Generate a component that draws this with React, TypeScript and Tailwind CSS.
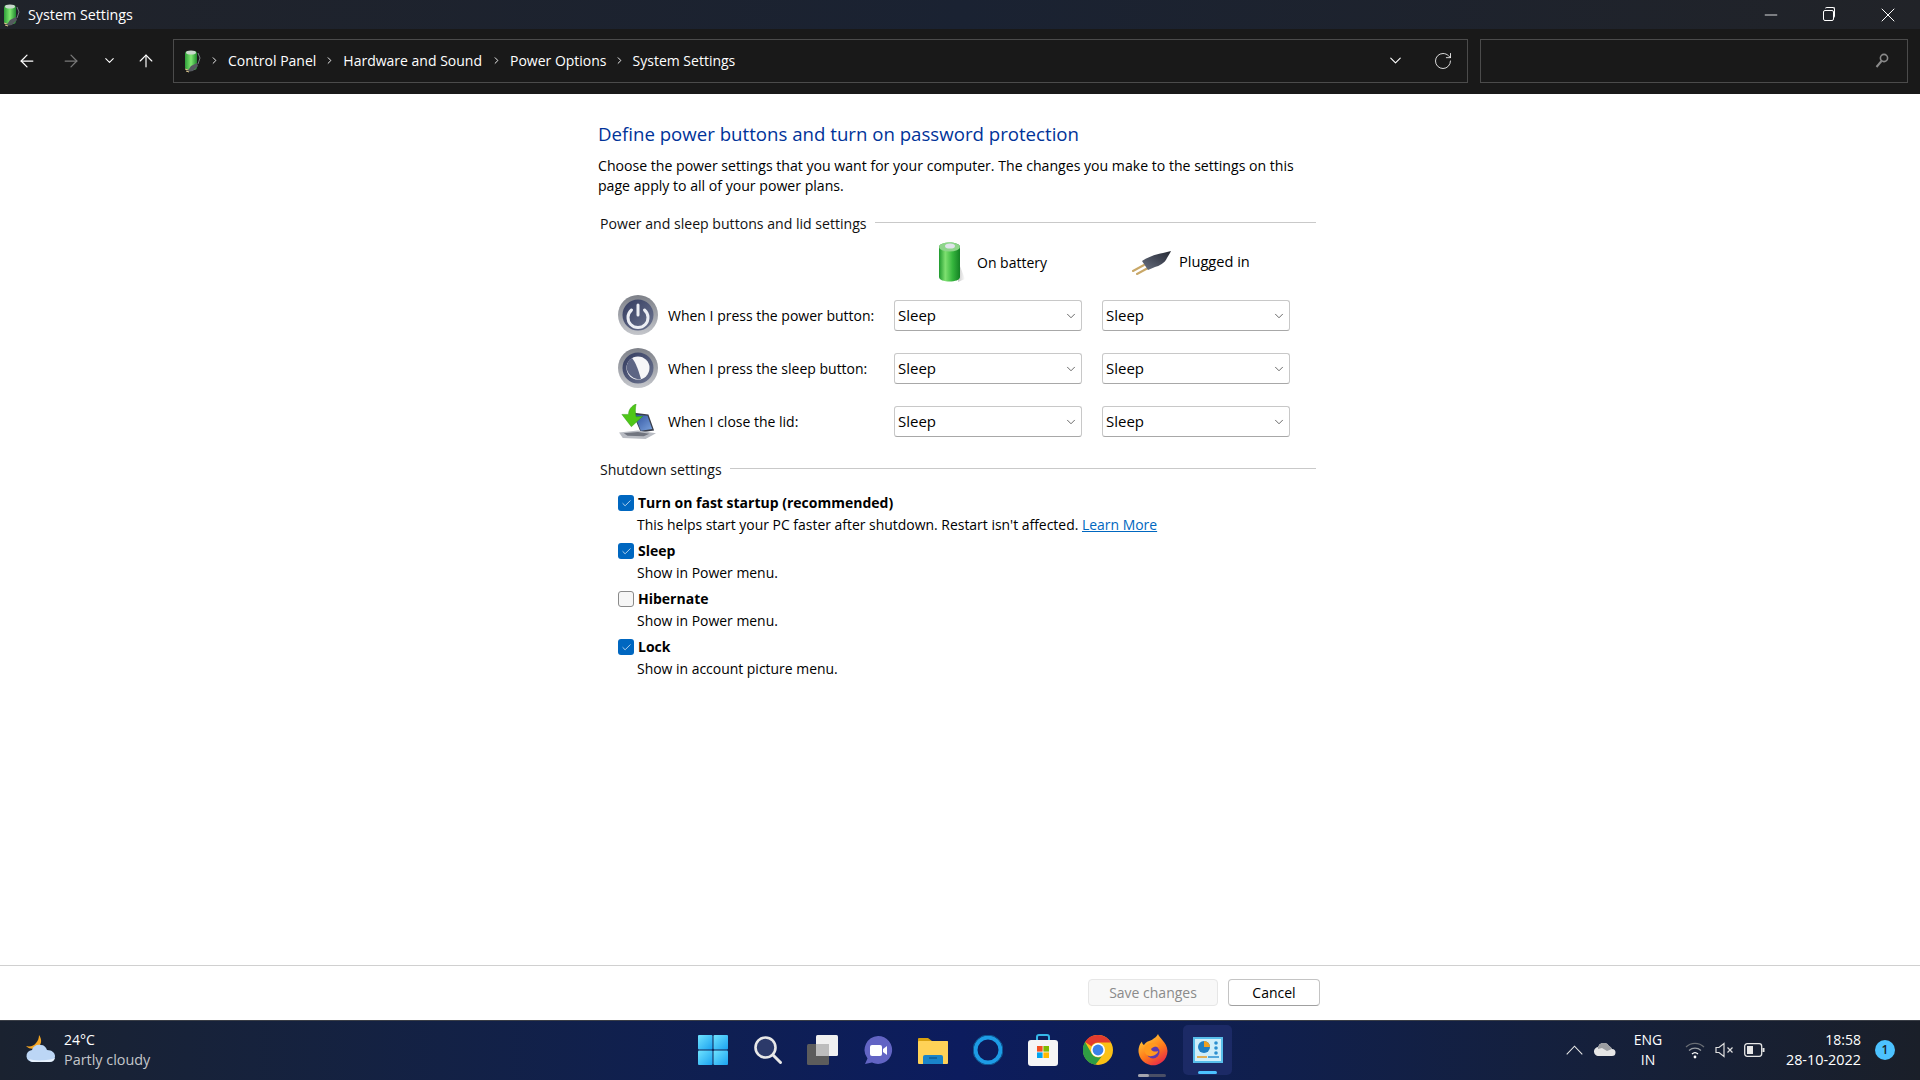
import { ArrowLeft, ArrowRight, ArrowUp, ChevronDown, ChevronRight, Check, Minus, X, RotateCw } from 'lucide-react';

function BatteryPlugIcon() {
  return (
    <svg width="20" height="24" viewBox="0 0 20 24">
      <defs>
        <linearGradient id="tb" x1="0" x2="1" y1="0" y2="0">
          <stop offset="0" stopColor="#2f9e3a" />
          <stop offset="0.5" stopColor="#7fe870" />
          <stop offset="1" stopColor="#1f8a2e" />
        </linearGradient>
      </defs>
      <rect x="3" y="2" width="12" height="19" rx="3" fill="url(#tb)" />
      <ellipse cx="9" cy="3.5" rx="5" ry="2" fill="#c9d8cc" />
      <path d="M16 4l2 5-2 6" fill="none" stroke="#777b82" strokeWidth="1" />
      <path d="M5 23l4-6 6-3 1 3-5 5z" fill="#55595f" />
      <path d="M3 20l3 1M4 22l3 1" stroke="#d9c48b" strokeWidth="1" />
    </svg>
  );
}

function BigBattery() {
  return (
    <svg width="30" height="42" viewBox="0 0 30 42">
      <defs>
        <linearGradient id="bb" x1="0" x2="1" y1="0" y2="0">
          <stop offset="0" stopColor="#1f9a2e" />
          <stop offset="0.3" stopColor="#7ee070" />
          <stop offset="0.65" stopColor="#35b63d" />
          <stop offset="1" stopColor="#148124" />
        </linearGradient>
        <linearGradient id="bs" x1="0" x2="1" y1="0" y2="0">
          <stop offset="0" stopColor="#c8c8c8" />
          <stop offset="1" stopColor="#ffffff" />
        </linearGradient>
      </defs>
      <path d="M22 20l7 18-7 3z" fill="url(#bs)" />
      <path d="M3 6c0-6 21-6 21 0v30c0 6-21 6-21 0z" fill="url(#bb)" />
      <ellipse cx="13.5" cy="6" rx="10.5" ry="4.5" fill="#8ed58a" />
      <ellipse cx="14" cy="5" rx="5" ry="2.6" fill="#dfe3ea" />
    </svg>
  );
}

function PlugIcon() {
  return (
    <svg width="42" height="26" viewBox="0 0 42 26">
      <defs>
        <linearGradient id="pl" x1="0" x2="1" y1="1" y2="0">
          <stop offset="0" stopColor="#6a7180" />
          <stop offset="0.6" stopColor="#3f4452" />
          <stop offset="1" stopColor="#262a33" />
        </linearGradient>
      </defs>
      <path d="M2 22l11-6M6 25l11-6" stroke="#c9a868" strokeWidth="2" strokeLinecap="round" />
      <path d="M11 12c6-4 14-7 21-8l8-2-1 2-3 5c-2 5-8 8-12 9l-7 3z" fill="url(#pl)" />
    </svg>
  );
}

function PowerIcon({ sleep }: { sleep?: boolean }) {
  const id = sleep ? 'ps' : 'pw';
  return (
    <svg width="40" height="42" viewBox="0 0 40 42">
      <defs>
        <linearGradient id={id + 'r'} x1="0" x2="0" y1="0" y2="1">
          <stop offset="0" stopColor="#7d8088" />
          <stop offset="1" stopColor="#c5c7cc" />
        </linearGradient>
        <linearGradient id={id + 'i'} x1="0" x2="1" y1="0" y2="1">
          <stop offset="0" stopColor="#333b5e" />
          <stop offset="1" stopColor="#6d7591" />
        </linearGradient>
      </defs>
      <circle cx="20" cy="21" r="20" fill={`url(#${id}r)`} />
      <circle cx="20" cy="21" r="15.5" fill={`url(#${id}i)`} />
      {sleep ? (
        <>
          <circle cx="20" cy="21" r="11.5" fill="#f6f6f8" />
          <path d="M14 11c4 5 6 11 9 21-6 1-12-3-14-9-1-5 1-10 5-12z" fill="#5d6584" />
        </>
      ) : (
        <>
          <path d="M13.5 16a10 10 0 1 0 13 0" fill="none" stroke="#eceef4" strokeWidth="3" strokeLinecap="round" />
          <path d="M20 11v10" stroke="#eceef4" strokeWidth="3" strokeLinecap="round" />
        </>
      )}
    </svg>
  );
}

function LidIcon() {
  return (
    <svg width="40" height="36" viewBox="0 0 40 38" className="mt-[3px]">
      <defs>
        <linearGradient id="ls" x1="0" x2="1" y1="0" y2="1">
          <stop offset="0" stopColor="#2c4f9e" />
          <stop offset="1" stopColor="#7ba2dc" />
        </linearGradient>
      </defs>
      <path d="M14 9l17 2 6 17-14 2z" fill="#3a3f4c" />
      <path d="M16 11l14 1.5 5 14-12 1.7z" fill="url(#ls)" />
      <path d="M0 30l20-2 19 3-11 6-24-1z" fill="#b9bcc3" />
      <path d="M5 31l15-1.5 12 2-6 2.5-17-.5z" fill="#71757f" />
      <path d="M18 0c-5 2-8 6-8 11H3l10 13 12-11-7 .5c-1-5-1-9 0-13.5z" fill="#4fc718" stroke="#2f9a10" strokeWidth="0.5" />
    </svg>
  );
}

function SleepSelect() {
  return (
    <div className="flex h-[31px] items-center justify-between rounded-[3px] border border-[#c8c8c8] border-b-[#a8a8a8] bg-white pl-[3px] pr-[3px] text-[15px] text-black">
      <span>Sleep</span>
      <ChevronDown size={14} strokeWidth={1.25} className="text-[#333]" />
    </div>
  );
}

function Section({ title }: { title: string }) {
  return (
    <div className="flex items-center gap-2 pl-[2px] text-[14.1px] text-[#111]">
      <span>{title}</span>
      <div className="mt-[-3px] h-px flex-1 bg-[#c9c9c9]" />
    </div>
  );
}

function PowerRow({ icon, label }: { icon: React.ReactNode; label: string }) {
  return (
    <div className="flex h-[53px] items-center pl-[20px] text-[14px] text-black">
      <div className="mb-[2px] flex w-[50px] shrink-0 items-center">{icon}</div>
      <span className="w-[226px] shrink-0">{label}</span>
      <div className="w-[188px] shrink-0"><SleepSelect /></div>
      <div className="ml-[20px] w-[188px] shrink-0"><SleepSelect /></div>
    </div>
  );
}

function ShutdownOption({ checked, label, children }: { checked: boolean; label: string; children: React.ReactNode }) {
  return (
    <div className="h-[48px] pl-[20px] pt-[1px] text-[14px] leading-[20px] text-black">
      <div className="flex h-[24px] items-center gap-[4px] font-bold">
        {checked ? (
          <div className="flex h-[16px] w-[16px] items-center justify-center rounded-[3px] bg-[#0067c0]">
            <Check size={11} strokeWidth={1.5} className="text-white" />
          </div>
        ) : (
          <div className="h-[16px] w-[16px] rounded-[3px] border border-[#8a8a8a] bg-[#f6f6f6]" />
        )}
        <span>{label}</span>
      </div>
      <div className="ml-[-1px] pl-[20px] text-[13.95px]">{children}</div>
    </div>
  );
}

function WinIcon() {
  return (
    <svg width="30" height="30" viewBox="0 0 30 30">
      <defs>
        <linearGradient id="w1" x1="0" x2="1" y1="0" y2="1">
          <stop offset="0" stopColor="#6fe3ff" />
          <stop offset="1" stopColor="#1aa2f0" />
        </linearGradient>
      </defs>
      <rect x="0" y="0" width="14.5" height="14.5" rx="1" fill="url(#w1)" />
      <rect x="15.5" y="0" width="14.5" height="14.5" rx="1" fill="url(#w1)" />
      <rect x="0" y="15.5" width="14.5" height="14.5" rx="1" fill="url(#w1)" />
      <rect x="15.5" y="15.5" width="14.5" height="14.5" rx="1" fill="url(#w1)" />
    </svg>
  );
}

function SearchIcon() {
  return (
    <svg width="30" height="30" viewBox="0 0 30 30">
      <circle cx="12.5" cy="12.5" r="10" fill="#2c3a6a" stroke="#e8e8e8" strokeWidth="2.6" />
      <path d="M20 20l7.5 7.5" stroke="#e8e8e8" strokeWidth="3" strokeLinecap="round" />
    </svg>
  );
}

function TaskViewIcon() {
  return (
    <svg width="32" height="30" viewBox="0 0 32 30">
      <rect x="9" y="0" width="22" height="21" rx="1.5" fill="#f0f0f0" />
      <rect x="0" y="9" width="22" height="21" rx="1.5" fill="#5c5c5c" />
      <rect x="9" y="9" width="13" height="12" fill="#bdbdbd" />
    </svg>
  );
}

function ChatIcon() {
  return (
    <svg width="30" height="30" viewBox="0 0 30 30">
      <path d="M15 1a14 14 0 1 1-6 26.6L2 29l2.5-5.5A14 14 0 0 1 15 1z" fill="#6264c4" />
      <rect x="7" y="10" width="12" height="11" rx="2" fill="#fff" />
      <path d="M20 14l4-3v9l-4-3z" fill="#fff" />
    </svg>
  );
}

function FolderIcon() {
  return (
    <svg width="30" height="30" viewBox="0 0 30 30">
      <path d="M0 4a1 1 0 0 1 1-1h9l4 3h15a1 1 0 0 1 1 1v3H0z" fill="#d9a10f" />
      <rect x="0" y="6" width="30" height="23" rx="1" fill="#ffd257" />
      <path d="M5 29v-7a2 2 0 0 1 2-2h16a2 2 0 0 1 2 2v7z" fill="#1a84c9" />
      <path d="M11 23h8" stroke="#0f5c96" strokeWidth="1.5" />
    </svg>
  );
}

function CortanaIcon() {
  return (
    <svg width="30" height="30" viewBox="0 0 30 30">
      <circle cx="15" cy="15" r="12.5" fill="none" stroke="#1d9ce6" strokeWidth="4" />
      <circle cx="15" cy="15" r="15" fill="none" stroke="#0f5c96" strokeWidth="1" />
    </svg>
  );
}

function StoreIcon() {
  return (
    <svg width="30" height="32" viewBox="0 0 30 32">
      <path d="M9 6V3a2 2 0 0 1 2-2h8a2 2 0 0 1 2 2v3" fill="none" stroke="#35b7e8" strokeWidth="2" />
      <rect x="0" y="6" width="30" height="26" rx="3" fill="#f5f5f5" />
      <rect x="9" y="12" width="5.6" height="5.6" fill="#f25022" />
      <rect x="15.4" y="12" width="5.6" height="5.6" fill="#7fba00" />
      <rect x="9" y="18.4" width="5.6" height="5.6" fill="#00a4ef" />
      <rect x="15.4" y="18.4" width="5.6" height="5.6" fill="#ffb900" />
    </svg>
  );
}

function ChromeIcon() {
  return (
    <svg width="30" height="30" viewBox="0 0 30 30">
      <circle cx="15" cy="15" r="15" fill="#fbc116" />
      <path d="M15 0a15 15 0 0 1 13 7.5H15a7.5 7.5 0 0 0-6.5 3.75L2 7A15 15 0 0 1 15 0z" fill="#e33b2e" />
      <path d="M2 7l6.5 11.25A7.5 7.5 0 0 0 18.75 21.5L12.3 29.8A15 15 0 0 1 2 7z" fill="#2f9e44" />
      <circle cx="15" cy="15" r="7" fill="#fff" />
      <circle cx="15" cy="15" r="5.4" fill="#3b82e8" />
    </svg>
  );
}

function FirefoxIcon() {
  return (
    <svg width="30" height="32" viewBox="0 0 30 32">
      <defs>
        <linearGradient id="ff" x1="0.2" x2="0.8" y1="0" y2="1">
          <stop offset="0" stopColor="#ffd23a" />
          <stop offset="0.55" stopColor="#ff7a1a" />
          <stop offset="1" stopColor="#e5214f" />
        </linearGradient>
      </defs>
      <path d="M20 0c1 4 9 8 9.5 17A14.5 14.5 0 1 1 1 13c.5-2 1.5-4 3-5.5 0 2 1 3 2 3.5 2-4 7-4 9-6 2-1 4-3 5-5z" fill="url(#ff)" />
      <circle cx="15" cy="18" r="6.5" fill="#5b3bb0" />
      <path d="M7 12c4-4 11-4 14 1-4-1-6 0-8 2 1 3 5 3 7 2 0 3-5 6-9 5-4-1-6-6-4-10z" fill="#ff9a1f" />
    </svg>
  );
}

function ControlPanelIcon() {
  return (
    <svg width="30" height="26" viewBox="0 0 30 26">
      <rect x="0" y="0" width="30" height="26" fill="#58bdea" />
      <rect x="2" y="2" width="26" height="22" fill="#cfeefa" />
      <circle cx="11" cy="10" r="6" fill="#1f7fc4" />
      <path d="M11 10V4a6 6 0 0 1 6 6z" fill="#f0a020" />
      <circle cx="23" cy="6" r="1.8" fill="#2a8fd0" />
      <circle cx="23" cy="11" r="1.8" fill="#2a8fd0" />
      <circle cx="23" cy="16" r="1.8" fill="#2a8fd0" />
      <path d="M4 20h10" stroke="#e79a20" strokeWidth="1.5" />
      <path d="M15 20h11" stroke="#2a8fd0" strokeWidth="1.5" />
    </svg>
  );
}

function WeatherIcon() {
  return (
    <svg width="32" height="30" viewBox="0 0 32 30">
      <path d="M14 0c3 4 3 9-1 12-3 2-8 3-12-1 4 1 8 0 10-3 2-2 3-5 3-8z" fill="#f5a623" />
      <path d="M8 27a6 6 0 0 1-1-12c1-4 5-6 9-5 3 0 5 2 6 5 5 0 8 3 8 6s-2 6-6 6z" fill="#bcd6f5" />
      <path d="M4 24c4 2 20 2 26-1-1 3-3 4-6 4H8c-2 0-3-1-4-3z" fill="#e7f1fc" />
    </svg>
  );
}

const taskbarIcons = [
  <WinIcon key="win" />,
  <SearchIcon key="search" />,
  <TaskViewIcon key="tasks" />,
  <ChatIcon key="chat" />,
  <FolderIcon key="folder" />,
  <CortanaIcon key="cortana" />,
  <StoreIcon key="store" />,
  <ChromeIcon key="chrome" />,
];

export default function App() {
  return (
    <div className="flex h-[1080px] w-[1920px] flex-col overflow-hidden bg-white font-['Open_Sans',sans-serif]">
      {/* title bar */}
      <div className="flex h-[29px] shrink-0 items-center bg-gradient-to-r from-[#20232a] via-[#1a2232] to-[#212328] text-[14.3px] text-white">
        <div className="ml-[1px] w-[27px]"><BatteryPlugIcon /></div>
        <span>System Settings</span>
        <div className="ml-auto flex items-center">
          <div className="flex w-[59px] justify-center"><Minus size={20} strokeWidth={1} /></div>
          <div className="relative flex w-[59px] justify-center">
            <div className="h-[11px] w-[11px] translate-x-[-1px] translate-y-[1px] rounded-[2px] border border-white" />
            <div className="absolute left-[25px] top-[-2px] h-[11px] w-[10px] rounded-[2px] border-r border-t border-white" />
          </div>
          <div className="flex w-[61px] justify-center pr-[4px]"><X size={24} strokeWidth={1} /></div>
        </div>
      </div>

      {/* toolbar */}
      <div className="flex h-[65px] shrink-0 items-center bg-[#191919] pb-[2px] pl-[17px] text-[14px] text-white">
        <ArrowLeft size={20} strokeWidth={1.5} />
        <ArrowRight size={20} strokeWidth={1.5} className="ml-[24px] text-[#7a7a7a]" />
        <ChevronDown size={15} strokeWidth={1.7} className="ml-[21px]" />
        <ArrowUp size={20} strokeWidth={1.4} className="ml-[19px]" />
        <div className="ml-[17px] flex h-[44px] w-[1295px] items-center border border-[#4b4b4b] pl-[8px]">
          <BatteryPlugIcon />
          <ChevronRight size={11} strokeWidth={2} className="ml-[7px]" />
          <span className="ml-[8px]">Control Panel</span>
          <ChevronRight size={11} strokeWidth={2} className="ml-[8px]" />
          <span className="ml-[8px]">Hardware and Sound</span>
          <ChevronRight size={11} strokeWidth={2} className="ml-[9px]" />
          <span className="ml-[8px]">Power Options</span>
          <ChevronRight size={11} strokeWidth={2} className="ml-[7px]" />
          <span className="ml-[8px]">System Settings</span>
          <ChevronDown size={19} strokeWidth={1.4} className="ml-auto mr-[28px]" />
          <RotateCw size={20} strokeWidth={1} className="mr-[14px]" />
        </div>
        <div className="ml-[12px] flex h-[44px] w-[428px] items-center justify-end border border-[#4b4b4b] pr-[18px]">
          <svg width="14" height="16" viewBox="0 0 14 16" fill="none">
            <circle cx="9" cy="5" r="3.6" stroke="#8a8a8a" strokeWidth="1.6" />
            <path d="M6.5 8L1.5 14" stroke="#8a8a8a" strokeWidth="2" />
          </svg>
        </div>
      </div>

      {/* content */}
      <div className="flex-1 pl-[598px] pt-[24px]">
        <div className="w-[718px]">
          <h1 className="h-[33px] text-[18.65px] leading-[32px] text-[#003399]">Define power buttons and turn on password protection</h1>
          <p className="mt-[5px] text-[14.1px] leading-[20px] text-black">
            Choose the power settings that you want for your computer. The changes you make to the settings on this page apply to all of your power plans.
          </p>
          <div className="mt-[17px]"><Section title="Power and sleep buttons and lid settings" /></div>
          <div className="mt-[1px] flex h-[54px] items-center text-[14px] text-black">
            <div className="ml-[338px] flex w-[195px] items-center gap-[11px]">
              <BigBattery />
              <span>On battery</span>
            </div>
            <div className="flex items-center gap-[6px]">
              <PlugIcon />
              <span className="text-[14.6px]">Plugged in</span>
            </div>
          </div>
          <PowerRow icon={<PowerIcon />} label="When I press the power button:" />
          <PowerRow icon={<PowerIcon sleep />} label="When I press the sleep button:" />
          <PowerRow icon={<LidIcon />} label="When I close the lid:" />
          <div className="mt-[11px]"><Section title="Shutdown settings" /></div>
          <div className="mt-[10px]">
            <ShutdownOption checked label="Turn on fast startup (recommended)">
              This helps start your PC faster after shutdown. Restart isn't affected.{' '}
              <span className="text-[#0067c0] underline">Learn More</span>
            </ShutdownOption>
            <ShutdownOption checked label="Sleep">Show in Power menu.</ShutdownOption>
            <ShutdownOption checked={false} label="Hibernate">Show in Power menu.</ShutdownOption>
            <ShutdownOption checked label="Lock">Show in account picture menu.</ShutdownOption>
          </div>
        </div>
      </div>

      {/* footer */}
      <div className="flex h-[55px] shrink-0 items-center justify-end gap-[10px] border-t border-[#d0d0d0] pb-[2px] pr-[600px] text-[14px]">
        <div className="flex h-[27px] w-[130px] items-center justify-center rounded-[4px] border border-[#e6e6e6] bg-[#f8f8f8] text-[#8a8a8a]">Save changes</div>
        <div className="flex h-[27px] w-[92px] items-center justify-center rounded-[4px] border border-[#c4c4c4] border-b-[#a0a0a0] bg-white text-black">Cancel</div>
      </div>

      {/* taskbar */}
      <div className="grid h-[60px] shrink-0 grid-cols-[1fr_auto_1fr] items-center border-t border-[#3a3e46] bg-gradient-to-r from-[#1a2230] via-[#0c1c5e] to-[#1a1f29] pb-[2px] text-white">
        <div className="flex items-center pl-[25px]">
          <WeatherIcon />
          <div className="ml-[7px] text-[14px] leading-[20px]">
            <div>24°C</div>
            <div className="text-[14.4px] text-[#c4c6ca]">Partly cloudy</div>
          </div>
        </div>
        <div className="flex items-center">
          {taskbarIcons.map((icon) => (
            <div key={icon.key} className="flex w-[55px] justify-center">{icon}</div>
          ))}
          <div className="relative flex w-[55px] justify-center">
            <FirefoxIcon />
            <div className="absolute bottom-[-11px] left-[13px] h-[3px] w-[28px] rounded-full bg-[#4a4f66]" />
            <div className="absolute bottom-[-11px] left-[13px] h-[3px] w-[11px] rounded-full bg-[#a4a4ae]" />
          </div>
          <div className="relative flex h-[50px] w-[55px] items-center justify-center">
            <div className="absolute inset-y-0 left-[3px] right-[3px] rounded-[5px] bg-[#1c2a66]" />
            <div className="relative"><ControlPanelIcon /></div>
            <div className="absolute bottom-[1px] left-[18px] h-[3px] w-[19px] rounded-full bg-[#4cc2ff]" />
          </div>
        </div>
        <div className="flex items-center justify-end text-[14px] leading-[20px]">
          <svg width="17" height="10" viewBox="0 0 17 10" fill="none" className="mr-[11px]">
            <path d="M0.7 9.3L8.5 1.2L16.3 9.3" stroke="#e6e6e6" strokeWidth="1.1" />
          </svg>
          <svg width="22" height="13" viewBox="0 0 22 13" className="mr-[12px]">
            <path d="M5 13a4.5 4.5 0 0 1-1-9 6 6 0 0 1 11-1 5 5 0 0 1 3 3 3.5 3.5 0 0 1 0 7z" fill="#e6e6e6" />
            <path d="M4 4a6 6 0 0 1 11-1 5 5 0 0 1 3 3l-5 2-5-3-4 1z" fill="#9c9ea2" />
          </svg>
          <div className="w-[40px] text-center">ENG<br />IN</div>
          <svg width="22" height="18" viewBox="0 0 22 18" fill="none" className="ml-[16px]">
            <path d="M2 6a13 13 0 0 1 18 0" stroke="#6a6e74" strokeWidth="1.3" />
            <path d="M5 9.5a9 9 0 0 1 12 0" stroke="#9a9ea4" strokeWidth="1.3" />
            <path d="M8 13a4.5 4.5 0 0 1 6 0" stroke="#fff" strokeWidth="1.3" />
            <circle cx="11" cy="16" r="1.4" fill="#fff" />
          </svg>
          <svg width="20" height="16" viewBox="0 0 20 16" fill="none" stroke="#dedede" strokeWidth="1.2" className="ml-[9px]">
            <path d="M1 5.5h3L9 1.5v13l-5-4H1z" />
            <path d="M12.5 5.5l5 5M17.5 5.5l-5 5" />
          </svg>
          <svg width="21" height="14" viewBox="0 0 21 14" fill="none" className="ml-[9px]">
            <rect x="0.7" y="0.7" width="17" height="12.6" rx="2.5" stroke="#e6e6e6" strokeWidth="1.3" />
            <rect x="3" y="3" width="6" height="8" fill="#e6e6e6" />
            <rect x="18.5" y="5" width="2" height="4" fill="#e6e6e6" />
          </svg>
          <div className="ml-[18px] w-[78px] text-right">18:58<br /><span className="text-[14.4px]">28-10-2022</span></div>
          <div className="ml-[14px] mr-[25px] flex h-[20px] w-[20px] items-center justify-center rounded-full bg-[#4cc2ff] text-[12px] font-semibold text-[#1a1f29]">1</div>
        </div>
      </div>
    </div>
  );
}
